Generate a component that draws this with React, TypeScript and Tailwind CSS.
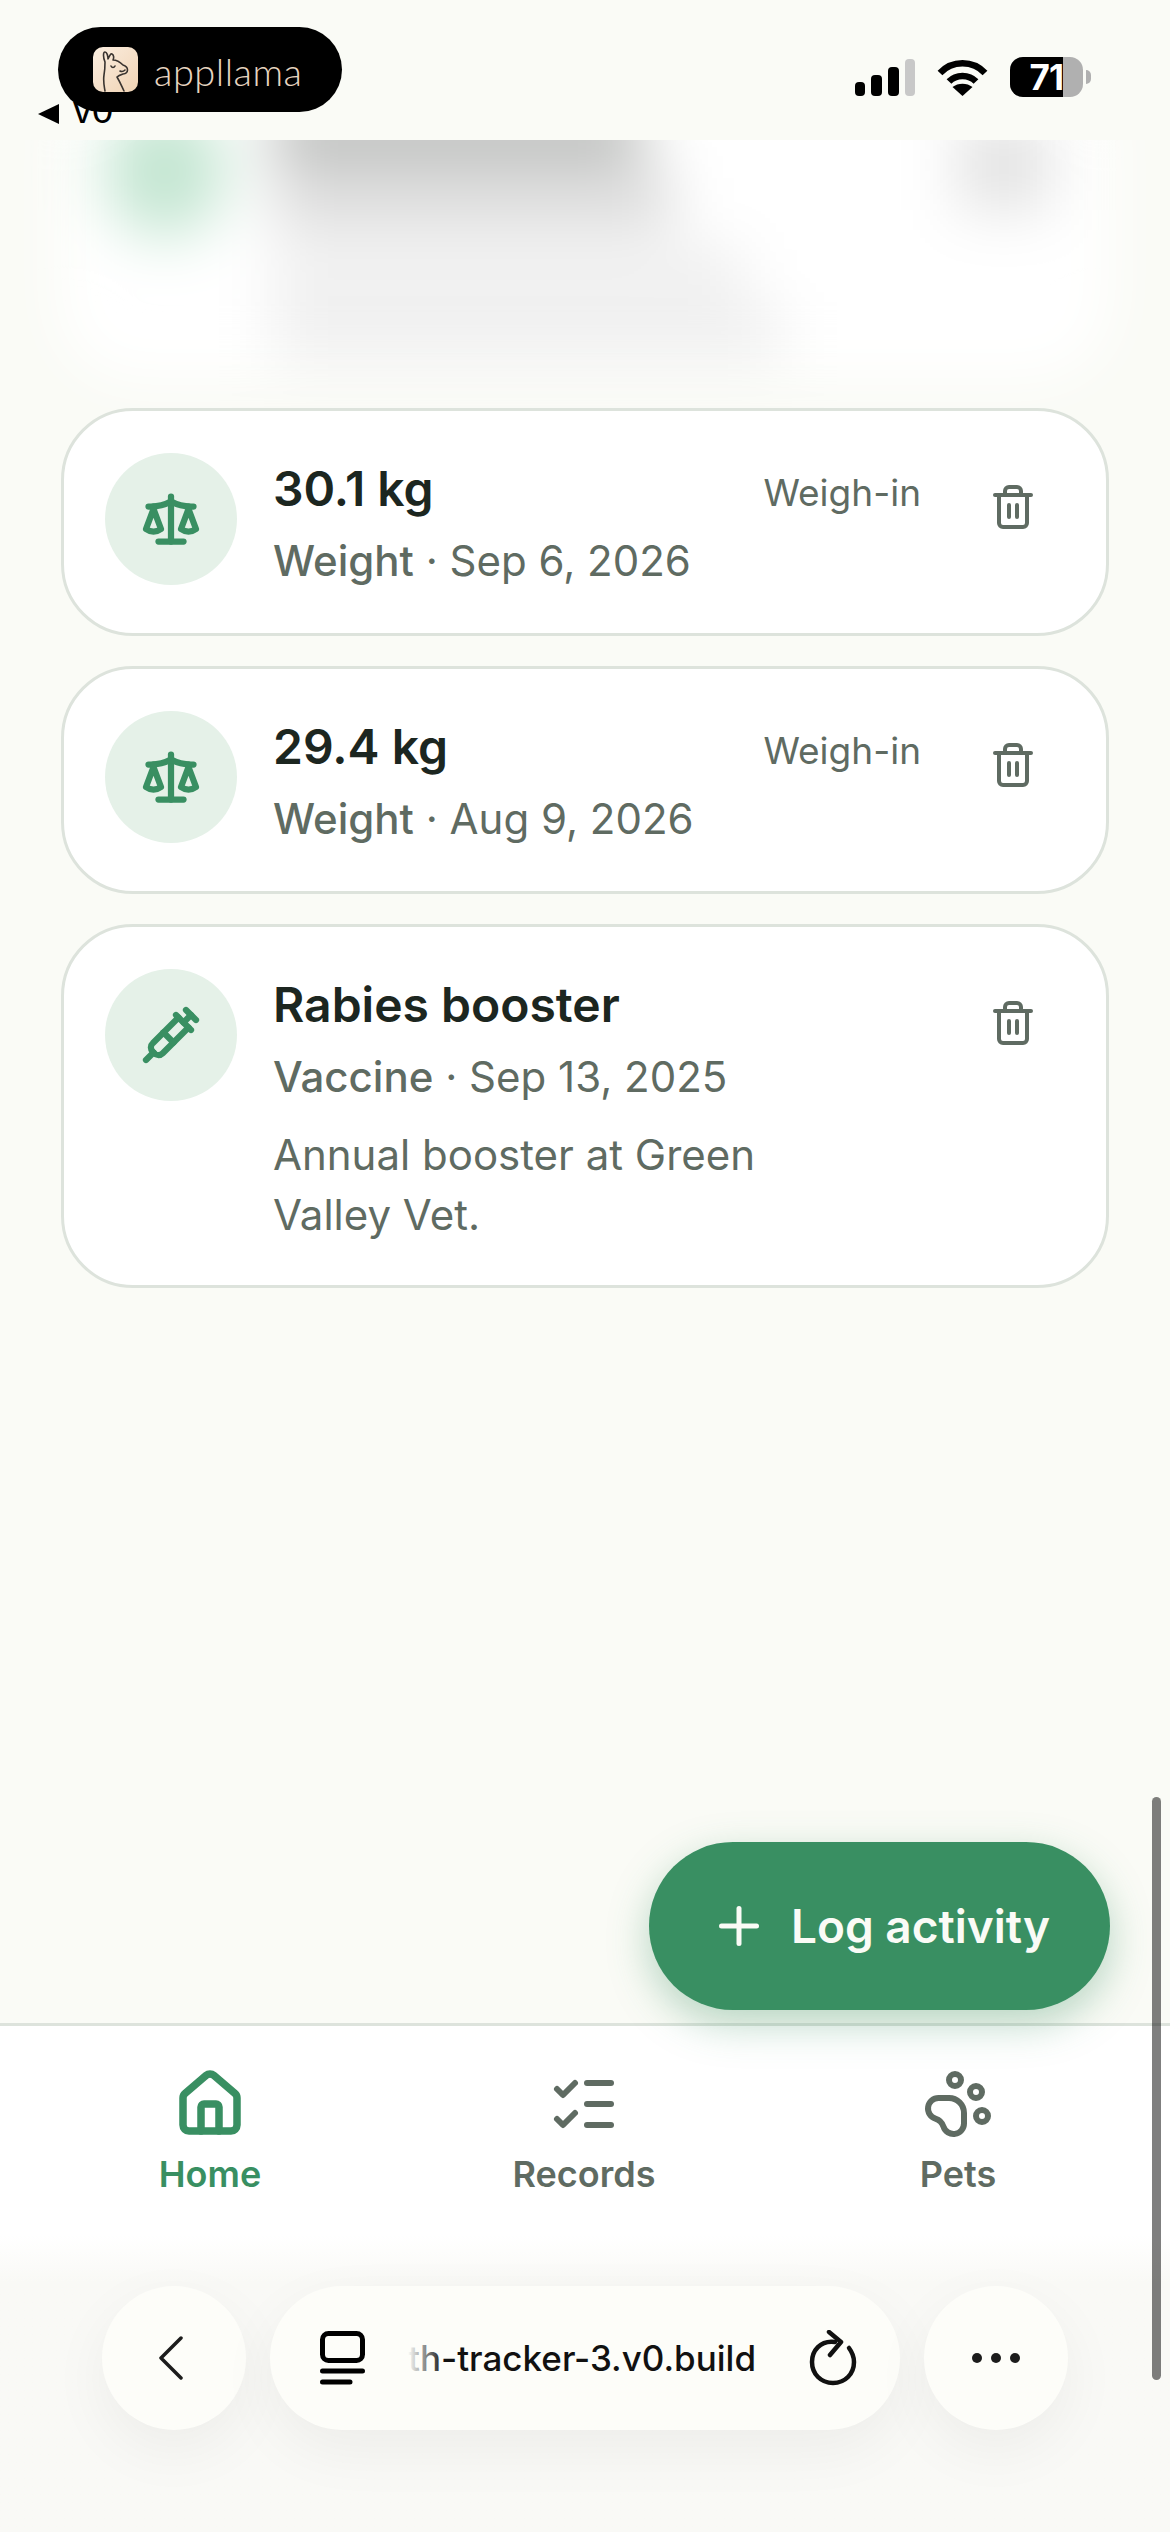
import { ListChecks, House, PawPrint, Plus, Scale, Syringe, Trash2 } from "lucide-react";
import type { ReactNode } from "react";

function StatusBar() {
  return (
    <div className="h-[140px] flex items-start justify-end gap-[22px] pt-[57px] pr-[79px] shrink-0">
      {/* Signal */}
      <div className="flex items-end gap-[6px] h-[37px] mt-[2px]">
        <div className="w-[10px] h-[14px] rounded-[4px] bg-black" />
        <div className="w-[11px] h-[21px] rounded-[4px] bg-black" />
        <div className="w-[11px] h-[29px] rounded-[4px] bg-black" />
        <div className="w-[10px] h-[37px] rounded-[4px] bg-[#c8c8c8]" />
      </div>
      {/* Wifi */}
      <svg width="51" height="37" viewBox="0 0 51 37" className="mt-[2px]">
        <path d="M3 14 C15 1 36 1 48 14" fill="none" stroke="#000" strokeWidth="6.5" />
        <path d="M12 22.5 C19 15 32 15 39 22.5" fill="none" stroke="#000" strokeWidth="6.5" />
        <path d="M25.5 37 L15.5 28 C21 23.5 30 23.5 35.5 28 Z" fill="#000" />
      </svg>
      {/* Battery */}
      <div className="flex items-center">
        <div className="w-[73px] h-[40px] rounded-[13px] overflow-hidden bg-[#b0b0b0]">
          <div className="w-[53px] h-full bg-black flex items-center justify-end text-white text-[35px] font-bold leading-none tracking-[-1px]">
            71
          </div>
        </div>
        <div className="w-[5px] h-[14px] ml-[3px] rounded-r-full bg-[#b0b0b0]" />
      </div>
    </div>
  );
}

function LlamaIcon() {
  return (
    <svg width="45" height="45" viewBox="0 0 45 45" fill="none" stroke="#3a3430" strokeWidth="1.6" strokeLinecap="round" strokeLinejoin="round">
      <path d="M12 44 C11 38 10 34 11 28 C12 23 12 19 12 15 C10 10 10 5 12 5 C14 5 15 9 15 12 C17 8 18 6 19 7 C21 8 21 11 20 13 C24 13 27 15 30 18 C36 20 36 26 30 27 C27 28 25 29 24 30 C27 35 29 40 31 44" />
      <path d="M18 19 C19 21 21 21 22 19" />
      <path d="M27 24 C29 25 31 24 32 23" />
    </svg>
  );
}

function AppllamaBadge() {
  return (
    <div className="absolute left-[58px] top-[27px] h-[85px] w-[284px] rounded-full bg-black flex items-center pl-[35px] gap-[16px]">
      <div className="w-[45px] h-[45px] rounded-[10px] overflow-hidden bg-linear-to-br from-[#fbeee0] to-[#f0d3b4]">
        <LlamaIcon />
      </div>
      <span className="font-['Lato',sans-serif] font-light text-[38px] leading-none text-[#e8d5c0] tracking-[0.5px] mt-[2px]">
        appllama
      </span>
    </div>
  );
}

function BackToV0() {
  return (
    <div className="absolute left-[38px] top-[92px] flex items-center gap-[14px] h-[36px] text-black">
      <div className="w-0 h-0 mt-[8px] border-y-[10px] border-y-transparent border-r-[21px] border-r-black" />
      <span className="font-['Liberation_Sans',sans-serif] text-[38px] leading-none">v0</span>
    </div>
  );
}

function IconCircle({ children }: { children: ReactNode }) {
  return (
    <div className="w-[132px] h-[132px] rounded-full bg-[#e5f1e8] flex items-center justify-center shrink-0 text-[#398f62]">
      {children}
    </div>
  );
}

type RecordCardProps = {
  icon: ReactNode;
  title: string;
  kind: string;
  date: string;
  tag?: string;
  note?: string;
};

function RecordCard({ icon, title, kind, date, tag, note }: RecordCardProps) {
  return (
    <div className="mx-[61px] border-[3px] border-[#dde3dc] rounded-[72px] bg-white pl-[41px] pr-[57px] pt-[42px] pb-[40px] flex items-start">
      <IconCircle>{icon}</IconCircle>
      <div className="ml-[36px] flex-1 min-w-0 pt-[6px]">
        <div className="text-[48px] leading-[60px] font-semibold text-[#1c2620]">{title}</div>
        <div className="mt-[10px] mb-[1px] text-[42px] leading-[63px] text-[#5f6b62]">
          <span className="font-medium">{kind}</span> · {date}
        </div>
        {note && <div className="mt-[17px] max-w-[520px] text-[42px] leading-[60px] text-[#5f6b62]">{note}</div>}
      </div>
      {tag && <div className="text-[37px] leading-[60px] mt-[10px] mr-[56px] text-[#5f6b62]">{tag}</div>}
      <button className="w-[72px] h-[72px] flex items-center justify-center text-[#5f6b62] mt-[18px]">
        <Trash2 size={48} strokeWidth={2} />
      </button>
    </div>
  );
}

function BlurredCard() {
  return (
    <div className="h-[268px] overflow-hidden shrink-0">
      <div className="-mt-[80px] mx-[61px] h-[318px] bg-white rounded-[72px] pl-[44px] pr-[60px] pt-[45px] flex items-start blur-[30px]">
        <div className="w-[120px] h-[132px] rounded-full bg-[#c4e6d2] shrink-0" />
        <div className="ml-[48px] flex-1">
          <div className="w-[370px] h-[56px] bg-[#b4b6b4]" />
          <div className="mt-[14px] w-[400px] h-[50px] bg-[#d6d6d6]" />
          <div className="mt-[26px] w-[470px] h-[44px] bg-[#ebebeb]" />
          <div className="mt-[16px] w-[510px] h-[44px] bg-[#ebebeb]" />
        </div>
        <div className="w-[90px] h-[90px] bg-[#e2e2e2] mt-[15px]" />
      </div>
    </div>
  );
}

function NavItem({ icon, label, active }: { icon: ReactNode; label: string; active?: boolean }) {
  return (
    <div className={`flex flex-col items-center ${active ? "text-[#398f62]" : "text-[#5f6b62]"}`}>
      {icon}
      <span className="text-[36px] leading-[48px] font-semibold mt-[10px]">{label}</span>
    </div>
  );
}

function BrowserBar() {
  return (
    <div className="h-[297px] shrink-0 bg-linear-to-b from-white to-[#f9f9f6] to-[16%] pl-[102px] pt-[51px]">
      <div className="flex items-start gap-[24px]">
        <div className="w-[144px] h-[144px] rounded-full bg-[#fdfdf9] shadow-[0_20px_60px_rgba(0,0,0,0.05)] flex items-center justify-center">
          <svg width="24" height="44" viewBox="0 0 24 44" fill="none" stroke="#1c1c1c" strokeWidth="3.5" strokeLinecap="round" strokeLinejoin="round" className="-ml-[6px]">
            <path d="M22 2 L2 22 L22 42" />
          </svg>
        </div>
        <div className="w-[630px] h-[144px] rounded-full bg-[#fdfdf9] shadow-[0_20px_60px_rgba(0,0,0,0.05)] flex items-center pl-[50px] pr-[43px]">
          <svg width="45" height="54" viewBox="0 0 45 54" fill="none" stroke="#000" strokeWidth="5" strokeLinecap="round" strokeLinejoin="round" className="shrink-0">
            <rect x="2.5" y="2.5" width="40" height="27" rx="6" />
            <path d="M2.5 40 H42.5 M2.5 51 H30" />
          </svg>
          <div className="relative ml-[43px] flex-1 overflow-hidden text-[35px] leading-[48px] font-medium text-[#111] whitespace-nowrap">
            th-tracker-3.v0.build
            <div className="absolute left-0 top-0 bottom-0 w-[36px] bg-linear-to-r from-[#fdfdf9] to-transparent" />
          </div>
          <svg width="48" height="56" viewBox="0 0 48 56" fill="none" stroke="#111" strokeWidth="4.5" strokeLinecap="round" strokeLinejoin="round" className="shrink-0">
            <path d="M26 12 C11 10 3 21 3 32 C3 44 12 53 24 53 C36 53 45 44 45 32 C45 26 43 22 40 18" />
            <path d="M20 2 L32 12 L21 25" />
          </svg>
        </div>
        <div className="w-[144px] h-[144px] rounded-full bg-[#fdfdf9] shadow-[0_20px_60px_rgba(0,0,0,0.05)] flex items-center justify-center gap-[9px]">
          <div className="w-[10px] h-[10px] rounded-full bg-[#1c1c1c]" />
          <div className="w-[10px] h-[10px] rounded-full bg-[#1c1c1c]" />
          <div className="w-[10px] h-[10px] rounded-full bg-[#1c1c1c]" />
        </div>
      </div>
    </div>
  );
}

export default function App() {
  return (
    <div className="relative w-[1170px] h-[2532px] overflow-hidden bg-[#fafbf6] flex flex-col font-['Inter',sans-serif]">
      <StatusBar />
      <BackToV0 />
      <AppllamaBadge />

      {/* Scrolling list */}
      <div className="relative z-10 flex-1 flex flex-col">
        <BlurredCard />
        <div className="flex flex-col gap-[30px]">
          <RecordCard icon={<Scale size={60} strokeWidth={2.5} />} title="30.1 kg" kind="Weight" date="Sep 6, 2026" tag="Weigh-in" />
          <RecordCard icon={<Scale size={60} strokeWidth={2.5} />} title="29.4 kg" kind="Weight" date="Aug 9, 2026" tag="Weigh-in" />
          <RecordCard
            icon={<Syringe size={60} strokeWidth={2.5} />}
            title="Rabies booster"
            kind="Vaccine"
            date="Sep 13, 2025"
            note="Annual booster at Green Valley Vet."
          />
        </div>
        <button className="absolute right-[60px] bottom-[13px] h-[168px] w-[461px] rounded-full bg-[#398f62] text-[#fafbf6] shadow-[0_14px_40px_rgba(57,143,98,0.35)] flex items-center justify-center gap-[22px] text-[46px] font-semibold">
          <Plus size={60} strokeWidth={2} />
          Log activity
        </button>
      </div>

      {/* Bottom nav */}
      <div className="h-[212px] shrink-0 bg-white border-t-[3px] border-[#dde3dc] pl-[23px] pr-[25px] pt-[42px] grid grid-cols-3">
        <NavItem active icon={<House size={72} strokeWidth={2.5} />} label="Home" />
        <NavItem icon={<ListChecks size={72} strokeWidth={2} />} label="Records" />
        <NavItem icon={<PawPrint size={72} strokeWidth={2} />} label="Pets" />
      </div>

      <BrowserBar />

      {/* Page scrollbar */}
      <div className="absolute z-20 left-[1152px] top-[1797px] w-[9px] h-[583px] rounded-full bg-black/50" />
    </div>
  );
}
